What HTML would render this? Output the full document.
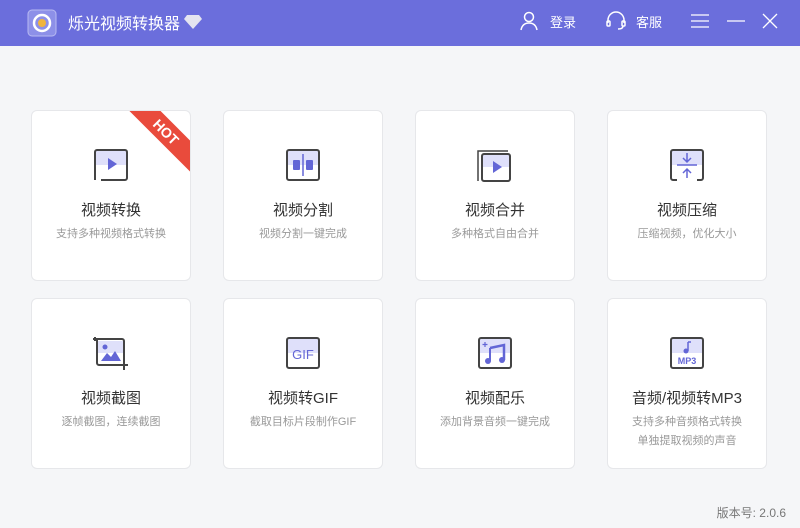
<!DOCTYPE html>
<html><head><meta charset="utf-8"><style>
*{margin:0;padding:0;box-sizing:border-box}
body{width:800px;height:528px;background:#f5f6f8;font-family:"Liberation Sans","Noto Sans CJK SC",sans-serif;position:relative;overflow:hidden}
.hd{position:absolute;left:0;top:0;width:800px;height:46px;background:#6b6edc;color:#fff}
.card{position:absolute;width:160px;height:171px;background:#fff;border:1px solid #e6e7ea;border-radius:6px;overflow:hidden;text-align:center}
.card svg.ic{position:absolute;left:61px;top:37px}
.t{position:absolute;left:0;right:0;top:88px;font-size:15px;color:#333}
.s{position:absolute;left:0;right:0;top:114px;font-size:11px;color:#999;line-height:19px}
.hot{position:absolute;right:-26px;top:10px;width:100px;height:22px;background:#e94b3c;color:#fff;font-weight:bold;font-size:14px;line-height:22px;transform:rotate(45deg);text-align:center}
</style></head><body>
<div class="hd">
<svg style="position:absolute;left:27px;top:9px" width="30" height="28" viewBox="0 0 30 28"><rect x="1" y="1" width="28" height="26" rx="4" fill="#8d90e8" stroke="#b8baf2"/><circle cx="15" cy="14" r="8" fill="none" stroke="#fff" stroke-width="2.5"/><circle cx="15" cy="14" r="4" fill="#f0b43c"/></svg>
<div style="position:absolute;left:68px;top:10px;font-size:16px">烁光视频转换器</div>
<svg style="position:absolute;left:183px;top:14px" width="20" height="16" viewBox="0 0 20 16"><path d="M4 1h12l3 4-9 10-9-10z" fill="#e4e4f0"/></svg>
<svg style="position:absolute;left:519px;top:11px" width="20" height="20" viewBox="0 0 20 20" fill="none" stroke="#fff" stroke-width="1.5"><circle cx="10" cy="6" r="4.5"/><path d="M2 19c1-5 4-7 8-7s7 2 8 7"/></svg>
<div style="position:absolute;left:550px;top:12px;font-size:13px">登录</div>
<svg style="position:absolute;left:605px;top:11px" width="22" height="20" viewBox="0 0 22 20" fill="none" stroke="#fff" stroke-width="1.5"><path d="M3 12V9a8 8 0 0 1 16 0v3"/><rect x="2" y="10" width="3" height="5" rx="1"/><rect x="17" y="10" width="3" height="5" rx="1"/><path d="M18 15c0 2-2 3-5 3"/></svg>
<div style="position:absolute;left:636px;top:12px;font-size:13px">客服</div>
<svg style="position:absolute;left:690px;top:13px" width="20" height="16" stroke="#fff" stroke-width="1.3"><path d="M1 2h18M1 8h18M1 14h18"/></svg>
<svg style="position:absolute;left:726px;top:13px" width="20" height="16" stroke="#fff" stroke-width="1.3"><path d="M1 8h18"/></svg>
<svg style="position:absolute;left:762px;top:13px" width="16" height="16" stroke="#fff" stroke-width="1.3"><path d="M1 1l14 14M15 1L1 15"/></svg>
</div>

<div class="card" style="left:31px;top:110px"><div class="hot">HOT</div>
<svg class="ic" width="36" height="34" viewBox="0 0 36 34"><rect x="2" y="2" width="32" height="15" fill="#dfe0fa"/><path d="M2 32V4a2 2 0 0 1 2-2h28a2 2 0 0 1 2 2v26a2 2 0 0 1-2 2H8" fill="none" stroke="#444" stroke-width="2"/><path d="M15 10l9 6-9 6z" fill="#6366d6"/></svg>
<div class="t">视频转换</div><div class="s">支持多种视频格式转换</div></div>

<div class="card" style="left:223px;top:110px">
<svg class="ic" width="36" height="34" viewBox="0 0 36 34"><rect x="2" y="2" width="32" height="15" fill="#dfe0fa"/><rect x="2" y="2" width="32" height="30" rx="2" fill="none" stroke="#444" stroke-width="2"/><rect x="8" y="12" width="7" height="10" rx="1" fill="#6366d6"/><rect x="21" y="12" width="7" height="10" rx="1" fill="#6366d6"/><path d="M18 6v22" stroke="#6366d6" stroke-width="1.5"/></svg>
<div class="t">视频分割</div><div class="s">视频分割一键完成</div></div>

<div class="card" style="left:415px;top:110px">
<svg class="ic" width="36" height="36" viewBox="0 0 36 36"><path d="M1 33V3h30" fill="none" stroke="#444" stroke-width="1.5"/><rect x="5" y="6" width="28" height="13" fill="#dfe0fa"/><rect x="5" y="6" width="28" height="27" rx="2" fill="none" stroke="#444" stroke-width="2"/><path d="M16 13l9 6-9 6z" fill="#6366d6"/></svg>
<div class="t">视频合并</div><div class="s">多种格式自由合并</div></div>

<div class="card" style="left:607px;top:110px">
<svg class="ic" width="36" height="34" viewBox="0 0 36 34"><rect x="2" y="2" width="32" height="15" fill="#dfe0fa"/><path d="M8 32H4a2 2 0 0 1-2-2V4a2 2 0 0 1 2-2h28a2 2 0 0 1 2 2v26a2 2 0 0 1-2 2h-4" fill="none" stroke="#444" stroke-width="2"/><g stroke="#6366d6" stroke-width="1.5" fill="none"><path d="M18 5v9M14 10l4 4 4-4M8 17h20M18 30v-9M14 25l4-4 4 4"/></g></svg>
<div class="t">视频压缩</div><div class="s">压缩视频，优化大小</div></div>

<div class="card" style="left:31px;top:298px">
<svg class="ic" width="38" height="38" viewBox="0 0 38 38" style="left:60px;top:35px"><rect x="5" y="7" width="27" height="12" fill="#dfe0fa"/><path d="M3 3v4M1 5h4" stroke="#444" stroke-width="2"/><path d="M5 5h25a2 2 0 0 1 2 2v24H7a2 2 0 0 1-2-2z" fill="none" stroke="#444" stroke-width="2"/><path d="M32 31v5M32 31h4" stroke="#444" stroke-width="2"/><circle cx="13" cy="13" r="2.5" fill="#6366d6"/><path d="M9 27l6-8 4 4 4-6 6 10z" fill="#6366d6"/></svg>
<div class="t">视频截图</div><div class="s">逐帧截图，连续截图</div></div>

<div class="card" style="left:223px;top:298px">
<svg class="ic" width="36" height="34" viewBox="0 0 36 34"><rect x="2" y="2" width="32" height="15" fill="#dfe0fa"/><rect x="2" y="2" width="32" height="30" rx="2" fill="none" stroke="#444" stroke-width="2"/><text x="18" y="23" text-anchor="middle" font-family="Liberation Sans" font-size="13" fill="#6366d6">GIF</text></svg>
<div class="t">视频转GIF</div><div class="s">截取目标片段制作GIF</div></div>

<div class="card" style="left:415px;top:298px">
<svg class="ic" width="36" height="34" viewBox="0 0 36 34"><rect x="2" y="2" width="32" height="15" fill="#dfe0fa"/><rect x="2" y="2" width="32" height="30" rx="2" fill="none" stroke="#444" stroke-width="2"/><path d="M8 6v5M5.5 8.5h5" stroke="#6366d6" stroke-width="1.2"/><path d="M13 12l14-3v15" fill="none" stroke="#6366d6" stroke-width="2.5"/><path d="M13 12v13" stroke="#6366d6" stroke-width="2"/><circle cx="11" cy="25" r="3" fill="#6366d6"/><circle cx="25" cy="24" r="3" fill="#6366d6"/></svg>
<div class="t">视频配乐</div><div class="s">添加背景音频一键完成</div></div>

<div class="card" style="left:607px;top:298px">
<svg class="ic" width="36" height="34" viewBox="0 0 36 34"><rect x="2" y="2" width="32" height="15" fill="#dfe0fa"/><rect x="2" y="2" width="32" height="30" rx="2" fill="none" stroke="#444" stroke-width="2"/><path d="M19 6v9" stroke="#6366d6" stroke-width="1.5"/><path d="M19 6h3" stroke="#6366d6" stroke-width="1.5"/><circle cx="17" cy="15" r="2.5" fill="#6366d6"/><text x="18" y="28" text-anchor="middle" font-family="Liberation Sans" font-weight="bold" font-size="9" fill="#6366d6">MP3</text></svg>
<div class="t">音频/视频转MP3</div><div class="s">支持多种音频格式转换<br>单独提取视频的声音</div></div>

<div style="position:absolute;right:14px;top:504px;font-size:12px;color:#777">版本号: 2.0.6</div>
</body></html>
